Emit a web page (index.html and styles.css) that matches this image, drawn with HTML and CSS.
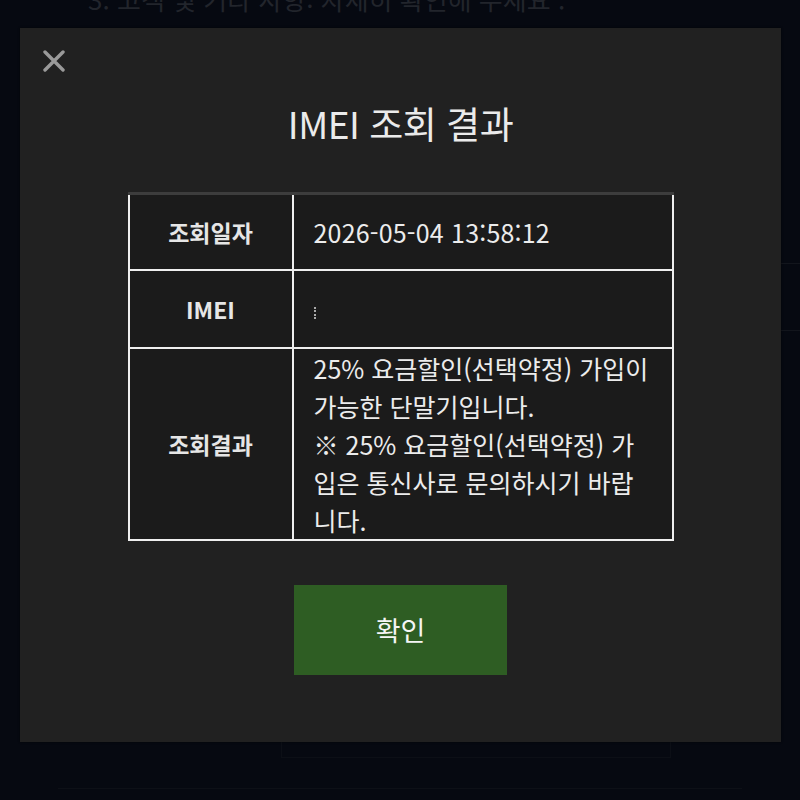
FILE: index.html
```html
<!DOCTYPE html>
<html lang="ko">
<head>
    <meta charset="UTF-8">
    <meta name="viewport" content="width=device-width, initial-scale=1.0">
    <title>IMEI 조회 결과</title>
    <link rel="stylesheet" href="styles.css">
</head>
<body>
<div class="page">
    <p class="page-title">3. 고객 및 기타 사항: 자세히 확인해 주세요 .</p>
    <div class="page-row"></div>
    <div class="page-row"></div>
    <div class="page-box"></div>
    <div class="page-line"></div>
</div>

<div class="modal">
    <button class="close-btn" aria-label="닫기">
        <svg width="22" height="22" viewBox="0 0 22 22">
            <path d="M2 2 L20 20 M20 2 L2 20" stroke="#9a9a9a" stroke-width="3.4" stroke-linecap="round"/>
        </svg>
    </button>
    <h2 class="modal-title">IMEI 조회 결과</h2>
    <table class="result-table">
        <tbody>
            <tr class="row-date">
                <th>조회일자</th>
                <td>2026-05-04 13:58:12</td>
            </tr>
            <tr class="row-imei">
                <th>IMEI</th>
                <td><span class="masked"></span></td>
            </tr>
            <tr class="row-result">
                <th>조회결과</th>
                <td>25% 요금할인(선택약정) 가입이 가능한 단말기입니다.<br>※ 25% 요금할인(선택약정) 가입은 통신사로 문의하시기 바랍니다.</td>
            </tr>
        </tbody>
    </table>
    <div class="actions">
        <button class="ok-btn">확인</button>
    </div>
</div>
</body>
</html>
```

FILE: styles.css
```css
body { margin: 0; background-color: #060911; font-family: "Noto Sans CJK KR", "Noto Sans", sans-serif; color: #eee; height: 800px; overflow: hidden; }

/* 뒤쪽 페이지 (모달에 가려짐) */
.page { height: 800px; }
.page-title { margin: 0; margin-top: -16px; padding-left: 88px; font-size: 26px; color: #22252c; line-height: 30px; }
.page-row { margin: 249px 0 0 auto; width: 40px; height: 1px; background: #12151c; }
.page-row + .page-row { margin-top: 66px; }
.page-box { margin: 411px 0 0 281px; width: 388px; height: 15px; border: 1px solid #0c0f16; border-top: none; }
.page-line { margin: 30px 0 0 58px; width: 684px; height: 1px; background: #0d1017; }

/* 모달 */
.modal {
    position: absolute;
    left: 20px;
    top: 28px;
    width: 761px;
    height: 714px;
    background-color: #212121;
    box-shadow: 0 0 2px rgba(0,0,0,0.6);
}
.close-btn { position: absolute; left: 23px; top: 22px; padding: 0; border: none; background: none; cursor: pointer; line-height: 0; }
.modal-title { margin: 0; padding-top: 66px; text-align: center; font-size: 37px; font-weight: 400; color: #ebebeb; line-height: 58px; letter-spacing: -0.5px; }

.result-table {
    margin: 40px auto 0;
    width: 546px;
    border-collapse: collapse;
    background-color: #1b1b1b;
    border-top: 3px solid #3d3d3d;
    font-size: 25px;
}
.result-table th, .result-table td { border: 2px solid #efefef; }
.result-table tr:first-child th, .result-table tr:first-child td { border-top: none; }
.result-table th { width: 160px; font-size: 23px; font-weight: 700; color: #e6e6e6; text-align: center; }
.result-table td { padding: 0 19px 0 20px; text-align: left; color: #ececec; line-height: 38px; }
.row-date { height: 76px; }
.row-date td { letter-spacing: 0.2px; }
.row-imei { height: 78px; }
.masked { display: inline-block; width: 3px; height: 12px; border-left: 2px dotted #aaa; vertical-align: middle; }

.actions { margin-top: 44px; text-align: center; }
.ok-btn {
    width: 213px;
    height: 90px;
    border: none;
    background-color: #2e5d23;
    color: #f5f5f5;
    font-family: inherit;
    font-size: 27px;
    cursor: pointer;
}
```
